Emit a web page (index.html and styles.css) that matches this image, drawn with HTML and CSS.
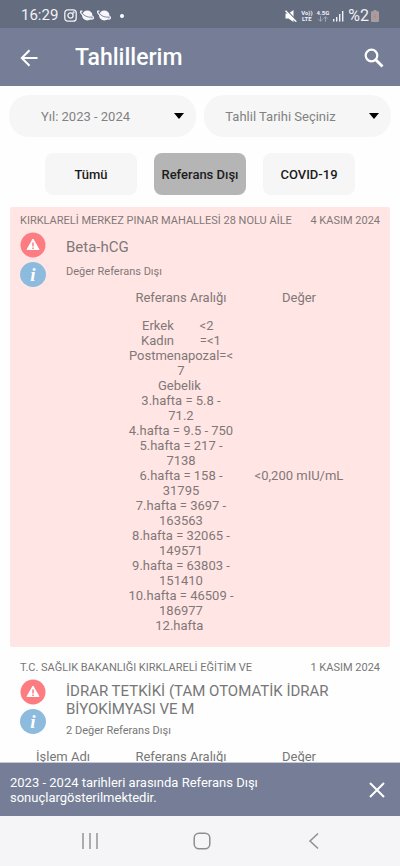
FILE: index.html
```html
<!DOCTYPE html>
<html lang="tr">
<head>
  <meta charset="UTF-8" />
  <meta name="viewport" content="width=device-width, initial-scale=1.0"/>
  <title>Tahlillerim</title>
  <link rel="stylesheet" href="styles.css">
</head>
<body>
  <div class="status">
    <span class="clock">16:29</span>
    <svg width="13" height="13" viewBox="0 0 13 13" fill="none" stroke="#f0f1f5" stroke-width="1.3"><rect x="0.8" y="0.8" width="11.4" height="11.4" rx="3"/><circle cx="6.5" cy="6.5" r="2.6"/><circle cx="9.6" cy="3.4" r="0.4"/></svg>
    <svg class="planet" width="14" height="13" viewBox="0 0 14 13"><ellipse cx="7.3" cy="6.5" rx="5.2" ry="5" fill="#f6f7fa"/><path d="M2.500 2.200C0 1.500-.3 3.500 3 6.200S12 11 13.200 9.500c.4-.7 0-1.600-.7-2.300" fill="none" stroke="#f6f7fa" stroke-width="1.300"/><path d="M2.300 4.200c1.500 2.500 5.500 4.500 9.700 3.900" fill="none" stroke="#646c80" stroke-width="0.8"/></svg>
    <svg class="planet" width="14" height="13" viewBox="0 0 14 13"><ellipse cx="7.3" cy="6.5" rx="5.2" ry="5" fill="#f6f7fa"/><path d="M2.500 2.200C0 1.500-.3 3.500 3 6.200S12 11 13.200 9.500c.4-.7 0-1.600-.7-2.300" fill="none" stroke="#f6f7fa" stroke-width="1.300"/><path d="M2.300 4.200c1.500 2.500 5.500 4.500 9.700 3.900" fill="none" stroke="#646c80" stroke-width="0.8"/></svg>
    <span class="dot"></span>
    <div class="status-right">
      <svg width="12" height="12" viewBox="0 0 12 12"><path d="M0.500 3.500h3L8.500 0v12L3.500 8.500h-3z" fill="#fff"/><path d="M1.500 0L12 11" stroke="#646c80" stroke-width="1.200"/><path d="M0.500 0.700L11.300 11.700" stroke="#fff" stroke-width="1.400"/></svg>
      <span class="net"><span>Vo))</span><span>LTE</span></span>
      <span class="net"><span>4.5G</span>
        <svg width="10" height="6" viewBox="0 0 10 6" fill="none" stroke="#a6abb9" stroke-width="0.9"><path d="M2.500 0.300v5M0.500 3.300l2 2 2-2M7.500 5.700v-5M5.500 2.700l2-2 2 2"/></svg>
      </span>
      <svg width="11" height="12" viewBox="0 0 11 12" fill="#f0f1f5"><path d="M0 9h1.400v2.500H0zM3 7h1.400v4.500H3zM6 4h1.400v7.500H6zM9 1h1.400v10.500H9z"/></svg>
      <span class="percent">%2</span>
      <svg class="battery" width="8" height="12" viewBox="0 0 8 12"><path d="M2.500 0h3v1.200H7q1 0 1 1V11q0 1-1 1H1q-1 0-1-1V2.200q0-1 1-1h1.500z" fill="#a59da2"/><path d="M4 3.500v5M2.500 6.500h3" stroke="#c4857f" stroke-width="1.200"/></svg>
    </div>
  </div>

  <header class="appbar">
    <button class="icon-btn" aria-label="Geri">
      <svg width="18" height="18" viewBox="0 0 18 18" fill="none" stroke="#fff" stroke-width="2"><path d="M17.500 9H2M9.500 1.200L1.800 9l7.700 7.800"/></svg>
    </button>
    <h1>Tahlillerim</h1>
    <button class="icon-btn" aria-label="Ara">
      <svg width="20" height="20" viewBox="0 0 20 20" fill="none" stroke="#fff"><circle cx="7.500" cy="7.500" r="5.800" stroke-width="2.200"/><path d="M12 12l6.500 6.500" stroke-width="2.800"/></svg>
    </button>
  </header>

  <main>
    <div class="filters">
      <div class="picker">
        <select aria-label="Yıl">
          <option>Yıl: 2023 - 2024</option>
        </select>
        <svg class="caret" width="10" height="6" viewBox="0 0 10 6"><path d="M0 0h10L5 6z"/></svg>
      </div>
      <div class="picker">
        <select aria-label="Tahlil Tarihi">
          <option>Tahlil Tarihi Seçiniz</option>
        </select>
        <svg class="caret" width="10" height="6" viewBox="0 0 10 6"><path d="M0 0h10L5 6z"/></svg>
      </div>
    </div>

    <div class="tabs">
      <button class="tab">Tümü</button>
      <button class="tab active">Referans Dışı</button>
      <button class="tab">COVID-19</button>
    </div>

    <article class="card alert">
      <div class="card-top">
        <span>KIRKLARELİ MERKEZ PINAR MAHALLESİ 28 NOLU AİLE</span>
        <span>4 KASIM 2024</span>
      </div>
      <div class="card-head">
        <div class="badges">
          <svg width="26" height="26" viewBox="0 0 26 26"><circle cx="13" cy="13" r="12.500" fill="#fc7c81"/><path d="M13 7l6 10.500H7z" fill="#fff" stroke="#fff" stroke-linejoin="round"/><path d="M13 10.500v4M13 15.500v1.500" stroke="#fc7c81" stroke-width="1.500"/></svg>
          <button class="info" aria-label="Bilgi">i</button>
        </div>
        <div>
          <h2>Beta-hCG</h2>
          <p>Değer Referans Dışı</p>
        </div>
      </div>
      <table>
        <tr><th class="name"></th><th class="range">Referans Aralığı</th><th class="value">Değer</th></tr>
        <tr>
          <td></td>
          <td>
            <span class="group">Erkek &nbsp; &nbsp; &nbsp; &nbsp;&lt;2&nbsp;&nbsp;</span>
            <span class="group">Kadın &nbsp; &nbsp; &nbsp; &nbsp;=&lt;1</span>
            Postmenapozal=&lt;<br>7<br>
            Gebelik&nbsp;<br>
            3.hafta = 5.8 -<br>71.2<br>
            4.hafta = 9.5 - 750<br>
            5.hafta = 217 -<br>7138<br>
            6.hafta = 158 -<br>31795<br>
            7.hafta = 3697 -<br>163563<br>
            8.hafta = 32065 -<br>149571<br>
            9.hafta = 63803 -<br>151410<br>
            10.hafta = 46509 -<br>186977<br>
            12.hafta&nbsp;
          </td>
          <td>&lt;0,200 mIU/mL</td>
        </tr>
      </table>
    </article>

    <article class="card">
      <div class="card-top">
        <span>T.C. SAĞLIK BAKANLIĞI KIRKLARELİ EĞİTİM VE</span>
        <span>1 KASIM 2024</span>
      </div>
      <div class="card-head">
        <div class="badges">
          <svg width="26" height="26" viewBox="0 0 26 26"><circle cx="13" cy="13" r="12.500" fill="#fc7c81"/><path d="M13 7l6 10.500H7z" fill="#fff" stroke="#fff" stroke-linejoin="round"/><path d="M13 10.500v4M13 15.500v1.500" stroke="#fc7c81" stroke-width="1.500"/></svg>
          <button class="info" aria-label="Bilgi">i</button>
        </div>
        <div>
          <h2>İDRAR TETKİKİ (TAM OTOMATİK İDRAR BİYOKİMYASI VE M</h2>
          <p>2 Değer Referans Dışı</p>
        </div>
      </div>
      <table>
        <tr><th class="name">İşlem Adı</th><th class="range">Referans Aralığı</th><th class="value">Değer</th></tr>
      </table>
    </article>
  </main>

  <div class="snackbar">
    <p>2023 - 2024 tarihleri arasında Referans Dışı sonuçlargösterilmektedir.</p>
    <button class="icon-btn" aria-label="Kapat">
      <svg width="16" height="16" viewBox="0 0 16 16" fill="none" stroke="#fff" stroke-width="2"><path d="M1 1l14 14M15 1L1 15"/></svg>
    </button>
  </div>

  <nav class="navbar">
    <button aria-label="Son uygulamalar">
      <svg width="18" height="18" viewBox="0 0 18 18" stroke="#8e8e92" stroke-width="1.400"><path d="M2 1v16M9 1v16M16 1v16"/></svg>
    </button>
    <button aria-label="Ana ekran">
      <svg width="18" height="18" viewBox="0 0 18 18" fill="none" stroke="#8e8e92" stroke-width="1.500"><rect x="1.200" y="1.200" width="15.600" height="15.600" rx="4.800"/></svg>
    </button>
    <button aria-label="Geri">
      <svg width="18" height="18" viewBox="0 0 18 18" fill="none" stroke="#8e8e92" stroke-width="1.500"><path d="M13 1.500L5 9l8 7.500"/></svg>
    </button>
  </nav>
</body>
</html>
```
FILE: styles.css
```css
* { box-sizing: border-box; }
body {
  margin: 0;
  height: 100vh;
  display: flex;
  flex-direction: column;
  background: #fefefe;
  color: #777;
  font-family: Roboto, "Liberation Sans", sans-serif;
  font-size: 13px;
  line-height: 15px;
}
button, select {
  font: inherit;
  border: none;
  padding: 0;
  cursor: pointer;
}
h1, h2, p { margin: 0; font-weight: 400; }
svg { display: block; flex: none; }

.status {
  display: flex;
  align-items: center;
  gap: 3px;
  height: 28px;
  padding: 3px 21px 0;
  background: #646c80;
  color: #f0f1f5;
  flex: none;
}
.clock { font-size: 15px; margin-right: 3px; }
.dot {
  width: 4px;
  height: 4px;
  margin-left: 6px;
  border-radius: 50%;
  background: #fff;
}
.status-right {
  display: flex;
  align-items: center;
  gap: 4px;
  margin-left: auto;
}
.net {
  display: flex;
  flex-direction: column;
  align-items: center;
  font-size: 6px;
  line-height: 6px;
  font-weight: 700;
}
.percent { font-size: 16px; }
.battery { margin-left: -2px; }

.appbar {
  display: flex;
  align-items: center;
  height: 58px;
  padding: 2px 16px 0 20px;
  background: #757e96;
  color: #fff;
  flex: none;
}
.appbar h1 {
  flex: 1;
  margin-left: 37px;
  font-size: 23px;
  line-height: 26px;
  font-weight: 500;
}
.icon-btn { background: none; }

main {
  flex: 1;
  min-height: 0;
  overflow: hidden;
  padding: 9px 9px 0;
}
.filters { display: flex; gap: 8px; }
.picker { position: relative; flex: 1; }
.picker select {
  width: 100%;
  height: 42px;
  padding-right: 34px;
  appearance: none;
  border-radius: 20px;
  background: #f6f6f6;
  color: #828282;
  text-align: center;
}
.caret {
  position: absolute;
  right: 12px;
  top: 18px;
  pointer-events: none;
}
.tabs {
  display: flex;
  justify-content: center;
  gap: 17px;
  margin: 16px 0 12px;
}
.tab {
  width: 92px;
  height: 42px;
  border-radius: 8px;
  background: #f6f6f6;
  color: #1c1c1c;
  font-weight: 500;
}
.tab.active { background: #b5b5b5; }

.card {
  margin: 0 1px 7px;
  border-radius: 2px;
}
.card.alert { background: #ffe6e5; color: #827777; }
.card-top {
  display: flex;
  justify-content: space-between;
  padding: 6px 10px 0;
  font-size: 11px;
  white-space: nowrap;
}
.card-head {
  display: flex;
  gap: 20px;
  padding: 4px 40px 0 10px;
}
.badges {
  display: flex;
  flex-direction: column;
  gap: 4px;
  height: 48px;
  flex: none;
}
.info {
  width: 26px;
  height: 25px;
  flex: none;
  border-radius: 50%;
  background: #8dbbdd;
  color: #fff;
  font: italic 700 19px/24px "Liberation Serif", serif;
}
.card h2 {
  min-height: 24px;
  margin: 3px 0 5px;
  display: flex;
  align-items: center;
  font-size: 15px;
  line-height: 18px;
}
.card p { font-size: 11px; line-height: 16px; }

table {
  width: 342px;
  margin-top: 10px;
  border-collapse: collapse;
  table-layout: fixed;
}
th, td {
  padding: 0;
  font-weight: 400;
  text-align: center;
  white-space: nowrap;
}
td { padding: 13px 0 14px; }
.name, .value { width: 31%; }
.range { width: 38%; }
.group { display: block; }

.snackbar {
  display: flex;
  align-items: center;
  justify-content: space-between;
  height: 54px;
  padding: 0 15px 0 10px;
  border-top: 1px solid #c3c9d9;
  background: #757e96;
  color: #fff;
  flex: none;
}
.snackbar p { max-width: 270px; }

.navbar {
  display: flex;
  height: 50px;
  padding: 0 30px 0 34px;
  background: #f5f5f8;
  flex: none;
}
.navbar button {
  flex: 1;
  display: flex;
  align-items: center;
  justify-content: center;
  background: none;
}
```
